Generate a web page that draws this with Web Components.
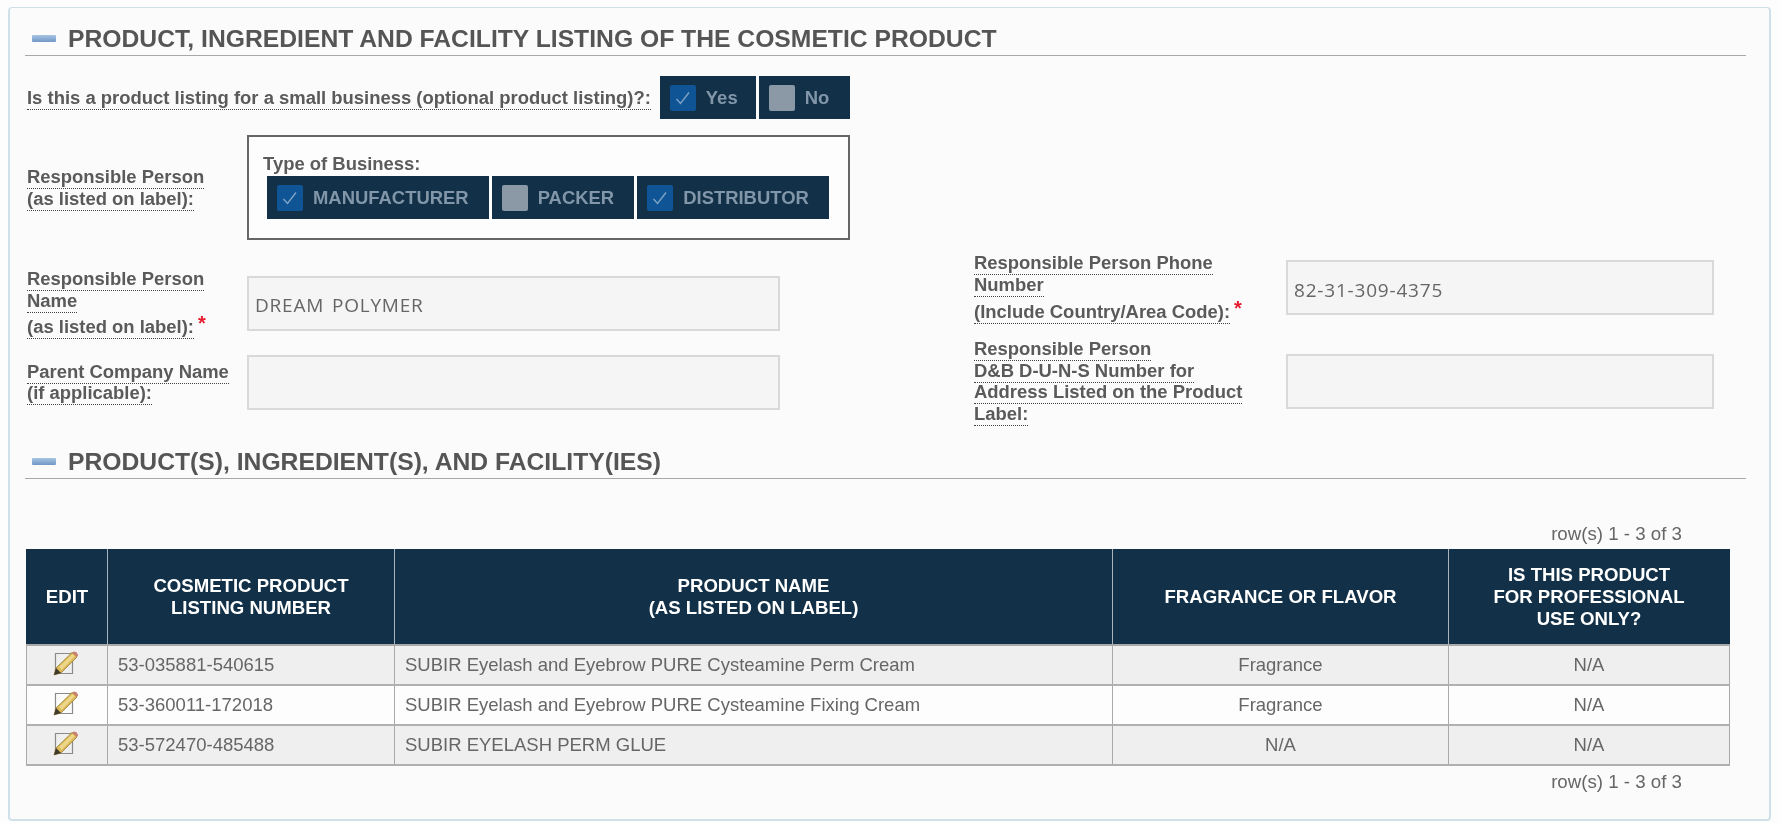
<!DOCTYPE html>
<html>
<head>
<meta charset="utf-8">
<title>Product listing</title>
<style>
    html, body { margin: 0; padding: 0; background: #fdfdfd; }
    body {
        font-family: "Liberation Sans", Arial, sans-serif;
        font-size: 18.45px;
        color: #5c5c5c;
        overflow: hidden;
    }
    .req {
        display: inline-block;
        margin-left: 4px;
        color: #e8192c;
        font-weight: bold;
        font-size: 20px;
        line-height: 25px;
        vertical-align: 3px;
    }
</style>
</head>
<body>
<listing-panel>
    <section-head>PRODUCT, INGREDIENT AND FACILITY LISTING OF THE COSMETIC PRODUCT</section-head>

    <form-row style="margin-top:20px">
        <field-label>Is this a product listing for a small business (optional product listing)?:</field-label>
        <check-group style="margin-left:9px">
            <check-button checked style="padding-right:18px">Yes</check-button>
            <check-button style="padding-right:21px">No</check-button>
        </check-group>
    </form-row>

    <form-row style="margin-top:16px">
        <field-label style="width:220px">Responsible Person<br>(as listed on label):</field-label>
        <business-box legend="Type of Business:">
            <check-button checked>MANUFACTURER</check-button>
            <check-button>PACKER</check-button>
            <check-button checked>DISTRIBUTOR</check-button>
        </business-box>
    </form-row>

    <form-columns>
        <form-column slot="left" style="padding-top:27px">
            <form-field label-width="220" box-width="533" style="height:72px">
                <field-label>Responsible Person<br>Name<br>(as listed on label):<span class="req" slot="after">*</span></field-label>
                <text-box slot="box">DREAM POLYMER</text-box>
            </form-field>
            <form-field label-width="220" box-width="533" style="height:55px;margin-top:16px">
                <field-label>Parent Company Name<br>(if applicable):</field-label>
                <text-box slot="box"></text-box>
            </form-field>
        </form-column>
        <form-column slot="right" style="padding-top:20px">
            <form-field label-width="312" box-width="428" style="height:55px">
                <field-label>Responsible Person Phone<br>Number<br>(Include Country/Area Code):<span class="req" slot="after">*</span></field-label>
                <text-box slot="box">82-31-309-4375</text-box>
            </form-field>
            <form-field label-width="312" box-width="428" style="height:55px;margin-top:39px">
                <field-label>Responsible Person<br>D&amp;B D-U-N-S Number for<br>Address Listed on the Product<br>Label:</field-label>
                <text-box slot="box"></text-box>
            </form-field>
        </form-column>
    </form-columns>

    <section-head style="margin-top:21px">PRODUCT(S), INGREDIENT(S), AND FACILITY(IES)</section-head>

    <row-count style="margin-top:44px;margin-bottom:5px">row(s) 1 - 3 of 3</row-count>
    <listing-table></listing-table>
    <row-count style="margin-top:5px">row(s) 1 - 3 of 3</row-count>
</listing-panel>

<script>
class ListingPanel extends HTMLElement {
    constructor() {
        super();
        this.attachShadow({mode: "open"}).innerHTML = `
            <style>
                :host {
                    display: block;
                    box-sizing: border-box;
                    width: 1763px;
                    height: 814px;
                    margin: 7px 0 0 8px;
                    padding: 0 23px 0 15px;
                    background: #fbfbfb;
                    border: 1px solid #cfe0ea;
                    border-width: 1px 2px 2px 2px;
                    border-radius: 4px;
                    filter: blur(0.35px);
                }
            </style>
            <slot></slot>`;
    }
}

class SectionHead extends HTMLElement {
    constructor() {
        super();
        this.attachShadow({mode: "open"}).innerHTML = `
            <style>
                :host {
                    display: flex;
                    align-items: center;
                    height: 47px;
                    padding-left: 7px;
                    border-bottom: 1px solid #a8a8a8;
                    color: #555;
                    font-size: 24.7px;
                    font-weight: bold;
                }
                .dash {
                    width: 24px;
                    height: 7px;
                    margin-right: 12px;
                    margin-top: 13px;
                    border-radius: 1px;
                    background: linear-gradient(#a9c4e2, #6f97c6);
                }
                .t { margin-top: 15px; }
            </style>
            <span class="dash"></span><span class="t"><slot></slot></span>`;
    }
}

class FormRow extends HTMLElement {
    constructor() {
        super();
        this.attachShadow({mode: "open"}).innerHTML = `
            <style>
                :host { display: flex; align-items: center; padding-left: 2px; }
            </style>
            <slot></slot>`;
    }
}

class FieldLabel extends HTMLElement {
    constructor() {
        super();
        this.attachShadow({mode: "open"}).innerHTML = `
            <style>
                :host {
                    display: inline-block;
                    font-weight: bold;
                    line-height: 21.7px;
                    color: #5a5a5a;
                }
                .u { border-bottom: 1px dotted #444; padding-bottom: 1px; }
            </style>
            <span class="u"><slot></slot></span><slot name="after"></slot>`;
    }
}

class CheckGroup extends HTMLElement {
    constructor() {
        super();
        this.attachShadow({mode: "open"}).innerHTML = `
            <style>
                :host { display: flex; gap: 3px; }
            </style>
            <slot></slot>`;
    }
}

class CheckButton extends HTMLElement {
    constructor() {
        super();
        const on = this.hasAttribute("checked");
        this.attachShadow({mode: "open"}).innerHTML = `
            <style>
                :host {
                    display: flex;
                    align-items: center;
                    height: 43px;
                    padding: 0 20px 0 10px;
                    background: #123047;
                    color: #8196a8;
                    font-weight: bold;
                    box-sizing: border-box;
                }
                .box {
                    width: 26px;
                    height: 26px;
                    margin-right: 10px;
                    border-radius: 2px;
                    background: ${on ? "#0f5595" : "#8b98a6"};
                    display: flex;
                    align-items: center;
                    justify-content: center;
                }
            </style>
            <span class="box">${on ? `<svg width="18" height="18" viewBox="0 0 18 18"><path d="M2.5 10 L6.5 14.5 L15 3.5" fill="none" stroke="#7fa3c6" stroke-width="1.4"/></svg>` : ""}</span>
            <slot></slot>`;
    }
}

class BusinessBox extends HTMLElement {
    constructor() {
        super();
        this.attachShadow({mode: "open"}).innerHTML = `
            <style>
                :host {
                    display: block;
                    box-sizing: border-box;
                    width: 603px;
                    height: 105px;
                    padding: 15px 0 0 14px;
                    border: 2px solid #666;
                    background: #fdfdfd;
                }
                .legend { font-weight: bold; line-height: 24px; }
                .btns { display: flex; gap: 3px; margin-left: 4px; }
            </style>
            <div class="legend">${this.getAttribute("legend")}</div>
            <div class="btns"><slot></slot></div>`;
    }
}

class FormColumns extends HTMLElement {
    constructor() {
        super();
        this.attachShadow({mode: "open"}).innerHTML = `
            <style>
                :host { display: flex; height: 170px; padding-left: 2px; }
                .l { width: 947px; }
            </style>
            <div class="l"><slot name="left"></slot></div>
            <div><slot name="right"></slot></div>`;
    }
}

class FormColumn extends HTMLElement {
    constructor() {
        super();
        this.attachShadow({mode: "open"}).innerHTML = `
            <style>:host { display: block; }</style>
            <slot></slot>`;
    }
}

class FormField extends HTMLElement {
    constructor() {
        super();
        const lw = this.getAttribute("label-width");
        const bw = this.getAttribute("box-width");
        this.attachShadow({mode: "open"}).innerHTML = `
            <style>
                :host { display: flex; align-items: center; }
                .lab { width: ${lw}px; flex: none; white-space: nowrap; }
                .box { width: ${bw}px; flex: none; }
            </style>
            <div class="lab"><slot></slot></div>
            <div class="box"><slot name="box"></slot></div>`;
    }
}

class TextBox extends HTMLElement {
    constructor() {
        super();
        this.attachShadow({mode: "open"}).innerHTML = `
            <style>
                :host {
                    display: flex;
                    align-items: center;
                    box-sizing: border-box;
                    height: 55px;
                    padding: 4px 6px 0;
                    background: #f5f5f5;
                    border: 2px solid #d9d9d9;
                    font-family: "Open Sans", sans-serif;
                    font-size: 19px;
                    letter-spacing: 0.8px;
                    word-spacing: 2px;
                    color: #666;
                }
            </style>
            <slot></slot>`;
    }
}

class RowCount extends HTMLElement {
    constructor() {
        super();
        this.attachShadow({mode: "open"}).innerHTML = `
            <style>
                :host {
                    display: block;
                    width: 1657px;
                    text-align: right;
                    font-size: 18.7px;
                    line-height: 21px;
                    color: #666;
                }
            </style>
            <slot></slot>`;
    }
}

class ListingTable extends HTMLElement {
    constructor() {
        super();
        const rows = [
            ["53-035881-540615", "SUBIR Eyelash and Eyebrow PURE Cysteamine Perm Cream", "Fragrance", "N/A"],
            ["53-360011-172018", "SUBIR Eyelash and Eyebrow PURE Cysteamine Fixing Cream", "Fragrance", "N/A"],
            ["53-572470-485488", "SUBIR EYELASH PERM GLUE", "N/A", "N/A"]
        ];
        const pencil = `<svg width="26" height="26" viewBox="0 0 26 26">
            <path d="M2.5 2.5 H19.5 V22.5 H2.5 Z" fill="none" stroke="#8a8a8a" stroke-width="1.2"/>
            <path d="M19 1.5 L24 6 L8 22 L1 24 L3 17 Z" fill="#dcb955" stroke="#8f7430" stroke-width="0.7"/>
            <path d="M6 16 L19.5 3 L22 5 L8.5 19 Z" fill="#eed68a"/>
            <path d="M19 1.5 L21 0.5 Q24.8 1 25 4.5 L24 6 Z" fill="#c9806e"/>
            <path d="M3 17 L8 22 L1 24 Z" fill="#3f3a30"/>
        </svg>`;
        const body = rows.map(r => `
            <tr>
                <td class="edit">${pencil}</td>
                <td>${r[0]}</td>
                <td>${r[1]}</td>
                <td class="c">${r[2]}</td>
                <td class="c">${r[3]}</td>
            </tr>`).join("");
        this.attachShadow({mode: "open"}).innerHTML = `
            <style>
                :host { display: block; width: 1703px; margin-left: 1px; }
                table { border-collapse: collapse; table-layout: fixed; width: 100%; font-size: 18.5px; }
                th {
                    height: 94px;
                    padding: 0;
                    background: #123047;
                    color: #fff;
                    font-size: 18.6px;
                    line-height: 21.7px;
                    border: 1px solid #123047;
                    border-left-color: #a9b4bd;
                    border-right-color: #a9b4bd;
                    border-bottom: 2px solid #a9a9a9;
                }
                th:first-child { border-left-color: #123047; }
                th:last-child { border-right-color: #123047; }
                td {
                    height: 38px;
                    padding: 0 10px;
                    border: 1px solid #a9a9a9;
                    border-bottom-width: 2px;
                    border-bottom-color: #b0b0b0;
                    color: #666;
                }
                tr:nth-child(odd) td { background: #efefef; }
                tr:nth-child(even) td { background: #fdfdfd; }
                .c { text-align: center; }
                .edit { padding: 0; text-align: center; }
                .edit svg { display: block; margin: 0 auto 2px; transform: translateX(-1px); }
            </style>
            <table>
                <colgroup>
                    <col style="width:81px"><col style="width:287px"><col style="width:718px"><col style="width:336px"><col style="width:281px">
                </colgroup>
                <thead>
                    <tr>
                        <th>EDIT</th>
                        <th>COSMETIC PRODUCT<br>LISTING NUMBER</th>
                        <th>PRODUCT NAME<br>(AS LISTED ON LABEL)</th>
                        <th>FRAGRANCE OR FLAVOR</th>
                        <th>IS THIS PRODUCT<br>FOR PROFESSIONAL<br>USE ONLY?</th>
                    </tr>
                </thead>
                <tbody>${body}</tbody>
            </table>`;
    }
}

customElements.define("listing-panel", ListingPanel);
customElements.define("section-head", SectionHead);
customElements.define("form-row", FormRow);
customElements.define("field-label", FieldLabel);
customElements.define("check-group", CheckGroup);
customElements.define("check-button", CheckButton);
customElements.define("business-box", BusinessBox);
customElements.define("form-columns", FormColumns);
customElements.define("form-column", FormColumn);
customElements.define("form-field", FormField);
customElements.define("text-box", TextBox);
customElements.define("row-count", RowCount);
customElements.define("listing-table", ListingTable);
</script>
</body>
</html>
